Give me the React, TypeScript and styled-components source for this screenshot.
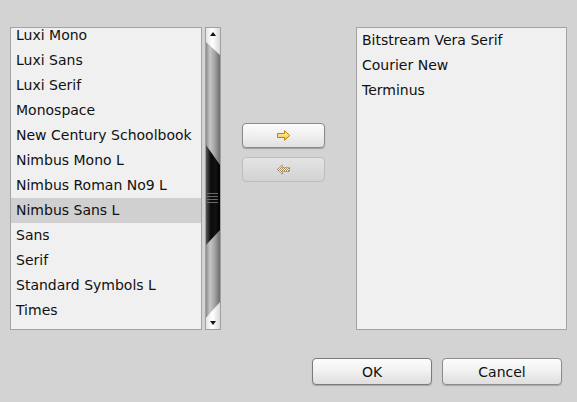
import React from "react";
import styled, { createGlobalStyle } from "styled-components";

const GlobalStyle = createGlobalStyle`
  html, body {
    margin: 0;
    padding: 0;
    background: #d3d3d3;
  }
  body {
    font-family: "DejaVu Sans", "Liberation Sans", sans-serif;
    font-size: 14px;
    color: #111;
  }
`;

const leftFonts = [
  "Luxi Mono",
  "Luxi Sans",
  "Luxi Serif",
  "Monospace",
  "New Century Schoolbook",
  "Nimbus Mono L",
  "Nimbus Roman No9 L",
  "Nimbus Sans L",
  "Sans",
  "Serif",
  "Standard Symbols L",
  "Times",
];

const rightFonts = ["Bitstream Vera Serif", "Courier New", "Terminus"];

const ArrowRight = () => (
  <svg width="15" height="11" viewBox="0 0 15 11">
    <defs>
      <linearGradient id="ar" x1="0" y1="0" x2="0" y2="1">
        <stop offset="0" stopColor="#fff6c0" />
        <stop offset="1" stopColor="#f3c23a" />
      </linearGradient>
    </defs>
    <path
      d="M1.5 3.5 H8.5 V0.8 L13.8 5.5 L8.5 10.2 V7.5 H1.5 Z"
      fill="url(#ar)"
      stroke="#c08300"
      strokeWidth="1"
      strokeLinejoin="miter"
    />
  </svg>
);

const ArrowLeftDisabled = () => (
  <svg width="15" height="11" viewBox="0 0 15 11">
    <defs>
      <pattern id="chk" width="2" height="2" patternUnits="userSpaceOnUse">
        <rect width="2" height="2" fill="#f4f4f4" />
        <rect width="1" height="1" fill="#a08760" />
        <rect x="1" y="1" width="1" height="1" fill="#a08760" />
      </pattern>
    </defs>
    <path
      d="M13.5 3.5 H6.5 V0.8 L1.2 5.5 L6.5 10.2 V7.5 H13.5 Z"
      fill="url(#chk)"
      stroke="#9c8050"
      strokeWidth="1"
      strokeDasharray="1 1"
    />
  </svg>
);

export default function App() {
  return (
    <>
      <GlobalStyle />
      <Dialog>
        <TopRow>
          <ListGroup>
            <ListBox $width={192}>
              <ListInner $offset={-5}>
                {leftFonts.map((f) => (
                  <Item key={f} $selected={f === "Nimbus Sans L"}>
                    {f}
                  </Item>
                ))}
              </ListInner>
            </ListBox>
            <ScrollBar>
              <TopCap>
                <UpTri />
              </TopCap>
              <Thumb>
                <Grip>
                  <span />
                  <span />
                  <span />
                  <span />
                </Grip>
              </Thumb>
              <BottomCap>
                <DownTri />
              </BottomCap>
            </ScrollBar>
          </ListGroup>

          <MoveColumn>
            <MoveButton>
              <ArrowRight />
            </MoveButton>
            <MoveButton $disabled>
              <ArrowLeftDisabled />
            </MoveButton>
          </MoveColumn>

          <ListBox $grow>
            <ListInner>
              {rightFonts.map((f) => (
                <Item key={f}>{f}</Item>
              ))}
            </ListInner>
          </ListBox>
        </TopRow>

        <ButtonRow>
          <DialogButton $default>OK</DialogButton>
          <DialogButton>Cancel</DialogButton>
        </ButtonRow>
      </Dialog>
    </>
  );
}

const Dialog = styled.div`
  width: 577px;
  height: 402px;
  box-sizing: border-box;
  padding: 27px 10px 0 10px;
  display: flex;
  flex-direction: column;
`;

const TopRow = styled.div`
  display: flex;
  height: 303px;
`;

const ListGroup = styled.div`
  display: flex;
  gap: 3px;
`;

const ListBox = styled.div<{ $width?: number; $grow?: boolean }>`
  box-sizing: border-box;
  width: ${(p) => (p.$width ? `${p.$width}px` : "auto")};
  flex: ${(p) => (p.$grow ? "1" : "none")};
  border: 1px solid #a4a4a4;
  background: #f0f0f0;
  overflow: hidden;
`;

const ListInner = styled.div<{ $offset?: number }>`
  margin-top: ${(p) => p.$offset || 0}px;
  display: flex;
  flex-direction: column;
`;

const Item = styled.div<{ $selected?: boolean }>`
  height: 25px;
  line-height: 25px;
  padding-left: 5px;
  white-space: nowrap;
  background: ${(p) => (p.$selected ? "#d0d0d0" : "transparent")};
`;

const ScrollBar = styled.div`
  position: relative;
  width: 16px;
  box-sizing: border-box;
  border: 1px solid #a0a0a0;
  background: linear-gradient(
    to right,
    #8c8c8c 0%,
    #c6c6c6 28%,
    #a4a4a4 62%,
    #6c6c6c 100%
  );
  overflow: hidden;
`;

const TopCap = styled.div`
  position: absolute;
  top: 0;
  left: 0;
  right: 0;
  height: 27px;
  background: linear-gradient(to right, #e4e4e4, #ffffff 45%, #dadada);
  clip-path: polygon(0 0, 100% 0, 100% 100%, 0 52%);
`;

const BottomCap = styled.div`
  position: absolute;
  bottom: 0;
  left: 0;
  right: 0;
  height: 27px;
  background: linear-gradient(to right, #e4e4e4, #ffffff 45%, #dadada);
  clip-path: polygon(0 58%, 100% 0, 100% 100%, 0 100%);
`;

const UpTri = styled.div`
  position: absolute;
  top: 4px;
  left: 4px;
  width: 0;
  height: 0;
  border-left: 3px solid transparent;
  border-right: 3px solid transparent;
  border-bottom: 4px solid #111;
`;

const DownTri = styled.div`
  position: absolute;
  bottom: 4px;
  left: 4px;
  width: 0;
  height: 0;
  border-left: 3px solid transparent;
  border-right: 3px solid transparent;
  border-top: 4px solid #111;
`;

const Thumb = styled.div`
  position: absolute;
  top: 117px;
  left: 0;
  right: 0;
  height: 100px;
  background: linear-gradient(to right, #555, #0a0a0a 35%, #121212 70%, #000);
  clip-path: polygon(0 0, 100% 20%, 100% 85%, 0 100%);
`;

const Grip = styled.div`
  position: absolute;
  top: 48px;
  left: 1px;
  right: 2px;
  display: flex;
  flex-direction: column;
  gap: 2px;

  span {
    display: block;
    height: 1px;
    background: #6a6a6a;
  }
`;

const MoveColumn = styled.div`
  width: 135px;
  box-sizing: border-box;
  padding: 96px 0 0 21px;
  display: flex;
  flex-direction: column;
  gap: 9px;
`;

const MoveButton = styled.div<{ $disabled?: boolean }>`
  width: 83px;
  height: 25px;
  box-sizing: border-box;
  border-radius: 4px;
  display: flex;
  align-items: center;
  justify-content: center;
  border: 1px solid ${(p) => (p.$disabled ? "#bdbdbd" : "#8a8a8a")};
  background: ${(p) =>
    p.$disabled
      ? "linear-gradient(#e4e4e4, #dadada 55%, #d2d2d2)"
      : "linear-gradient(#fbfbfb, #f0f0f0 50%, #e0e0e0)"};
  box-shadow: ${(p) => (p.$disabled ? "none" : "0 1px 1px rgba(0,0,0,0.25)")};
`;

const ButtonRow = styled.div`
  display: flex;
  justify-content: flex-end;
  gap: 10px;
  margin-top: 28px;
  padding-right: 5px;
`;

const DialogButton = styled.div<{ $default?: boolean }>`
  width: 120px;
  height: 27px;
  box-sizing: border-box;
  border-radius: 4px;
  border: 1px solid ${(p) => (p.$default ? "#7a7a7a" : "#8c8c8c")};
  background: linear-gradient(#fdfdfd, #f0f0f0 50%, #dedede);
  box-shadow: 0 1px 1px rgba(0, 0, 0, 0.2);
  display: flex;
  align-items: center;
  justify-content: center;
  color: #111;
`;
